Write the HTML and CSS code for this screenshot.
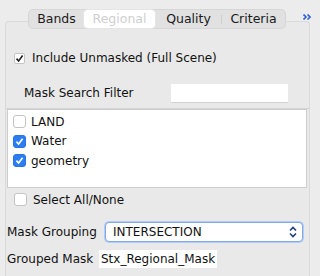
FILE: index.html
```html
<!DOCTYPE html>
<html lang="en">
<head>
	<meta charset="UTF-8">
	<title>Regional</title>
	<link rel="stylesheet" href="styles.css">
</head>
<body>
	<div class="top">
		<ul class="tabs">
			<li>Bands</li>
			<li class="on">Regional</li>
			<li class="sep">Quality</li>
			<li>Criteria</li>
		</ul>
		<svg class="more" width="8" height="6" viewBox="0 0 8 6">
			<path d="M0.5 0.5 L3 3 L0.5 5.5 M4.5 0.5 L7 3 L4.5 5.5" fill="none" stroke="#2f62d6" stroke-width="1.6"/>
		</svg>
	</div>

	<div class="panel">
		<label class="row include">
			<span class="box plain">
				<svg width="9" height="9" viewBox="0 0 9 9"><path d="M1.5 4.6 L3.6 7 L7.6 1.6" fill="none" stroke="#222" stroke-width="1.6"/></svg>
			</span>
			Include Unmasked (Full Scene)
		</label>

		<div class="row search">
			<span class="search-label">Mask Search Filter</span>
			<span class="field"></span>
		</div>

		<div class="rule"></div>

		<ul class="masks">
			<li><span class="box"></span>LAND</li>
			<li><span class="box checked"><svg width="9" height="9" viewBox="0 0 9 9"><path d="M1.4 4.6 L3.6 7 L7.6 1.8" fill="none" stroke="#fff" stroke-width="1.7"/></svg></span>Water</li>
			<li><span class="box checked"><svg width="9" height="9" viewBox="0 0 9 9"><path d="M1.4 4.6 L3.6 7 L7.6 1.8" fill="none" stroke="#fff" stroke-width="1.7"/></svg></span>geometry</li>
		</ul>

		<label class="row all"><span class="box"></span>Select All/None</label>

		<div class="row grouping">
			<span class="grouping-label">Mask Grouping</span>
			<div class="select">
				INTERSECTION
				<svg width="8" height="12" viewBox="0 0 8 12"><path d="M1 4.5 L4 1.5 L7 4.5 M1 7.5 L4 10.5 L7 7.5" fill="none" stroke="#1f3f7a" stroke-width="1.6"/></svg>
			</div>
		</div>

		<div class="row grouped">
			<span class="grouped-label">Grouped Mask</span>
			<span class="value">Stx_Regional_Mask</span>
		</div>
	</div>
</body>
</html>
```

FILE: styles.css
```css
body{
	margin: 0;
	background: #ececec;
	font-family: "DejaVu Sans", sans-serif;
	font-size: 12px;
	color: #111;
	height: 276px;
	overflow: hidden;
}

.top{
	display: flex;
	align-items: center;
	padding: 9px 9px 0 28px;
	position: relative;
	z-index: 1;
	margin-bottom: -8px;
}

.tabs{
	display: flex;
	margin: 0;
	padding: 0;
	list-style: none;
	height: 20px;
	width: 258px;
	box-sizing: border-box;
	background: #e1e1e1;
	border: 1px solid #d6d6d6;
	border-radius: 5px;
}

.tabs li{
	flex: 0 0 auto;
	text-align: center;
	line-height: 18px;
	font-size: 12.5px;
	color: #1a1a1a;
	position: relative;
}

.tabs li:nth-child(1){ width: 55px; }
.tabs li:nth-child(2){ width: 71px; }
.tabs li:nth-child(3){ width: 67px; }
.tabs li:nth-child(4){ width: 63px; }

.tabs .on{
	background: #fff;
	border-radius: 4px;
	color: #cfcfcf;
	text-shadow: 0 0 1px #fff;
	box-shadow: 0 0 0 1px #e6e6e6;
}

.tabs .sep::after{
	content: "";
	position: absolute;
	right: 0;
	top: 5px;
	height: 9px;
	border-right: 1px solid #cfcfcf;
}

.more{
	margin-left: auto;
	margin-top: -4px;
}

.panel{
	margin: 0 10px 0 5px;
	height: 255px;
	box-sizing: border-box;
	background: #e9e9e9;
	border: 1px solid #dadada;
	border-bottom: 0;
	border-radius: 4px 4px 0 0;
}

.row{
	display: flex;
	align-items: center;
}

.box{
	flex: 0 0 auto;
	width: 13px;
	height: 13px;
	box-sizing: border-box;
	background: #fff;
	border: 1px solid #c4c4c4;
	border-radius: 3px;
	display: flex;
	align-items: center;
	justify-content: center;
}

.box.checked{
	background: #2b7df3;
	border-color: #2a74e0;
}

.include{
	height: 20px;
	margin-top: 26px;
	padding-left: 8px;
}

.include .box{
	width: 11px;
	height: 11px;
	margin-right: 7px;
	border-radius: 2px;
}

.search{
	height: 18px;
	margin-top: 16px;
	padding-left: 18px;
}

.search-label{
	flex: 0 0 147px;
}

.field{
	width: 117px;
	height: 18px;
	background: #fff;
	box-shadow: 0 1px 0 #d2d2d2;
}

.rule{
	margin-top: 6px;
	border-top: 1px solid #d4d4d4;
}

.masks{
	list-style: none;
	margin: 0 2px 0 1px;
	padding: 2px 0 0 5px;
	height: 79px;
	box-sizing: border-box;
	background: #fff;
	border: 1px solid #cdcdcd;
}

.masks li{
	display: flex;
	align-items: center;
	height: 19.5px;
}

.masks li .box{
	margin-right: 5px;
}

.all{
	margin-top: 5px;
	padding-left: 8px;
	height: 13px;
}

.all .box{
	margin-right: 6px;
}

.grouping{
	margin-top: 16px;
	padding-left: 1px;
	height: 20px;
}

.grouping-label{
	flex: 0 0 98px;
}

.select{
	width: 198px;
	height: 20px;
	box-sizing: border-box;
	display: flex;
	align-items: center;
	justify-content: space-between;
	padding: 0 5px 0 7px;
	background: #fff;
	border: 1px solid #7fa9ea;
	border-radius: 4px;
	box-shadow: 0 0 0 1px #b4cdf3;
}

.grouped{
	margin-top: 8px;
	padding-left: 1px;
	height: 18px;
}

.grouped-label{
	flex: 0 0 92px;
}

.value{
	width: 118px;
	height: 18px;
	line-height: 18px;
	padding-left: 2px;
	box-sizing: border-box;
	background: #fff;
}
```
